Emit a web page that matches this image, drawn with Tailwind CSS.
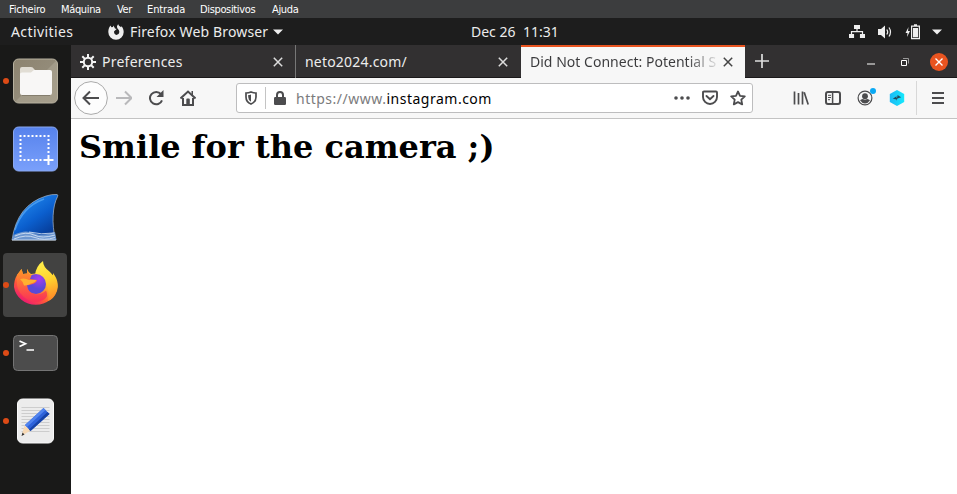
<!DOCTYPE html>
<html lang="en">
<head>
<meta charset="utf-8">
<title>Did Not Connect: Potential Security Issue</title>
<script src="https://cdn.jsdelivr.net/npm/@tailwindcss/browser@4"></script>
</head>
<body class="flex h-screen w-screen flex-col overflow-hidden bg-[#1b1b1b] font-['Noto_Sans',sans-serif] text-[14px] whitespace-nowrap">

<!-- Virtual machine menu -->
<nav class="flex h-[18px] shrink-0 items-center bg-[#3c3d3e] pt-px pl-[9px] font-['DejaVu_Sans_Condensed','DejaVu_Sans',sans-serif] text-[11px] leading-[17px] tracking-[-0.35px] text-white">
  <span class="w-[52px] tracking-[-0.2px]">Ficheiro</span><span class="w-[56px]">Máquina</span><span class="w-[30px]">Ver</span><span class="w-[53px] tracking-[-0.1px]">Entrada</span><span class="w-[72px]">Dispositivos</span><span>Ajuda</span>
</nav>

<!-- Desktop top bar -->
<header class="flex h-[27px] shrink-0 items-center bg-[#1d1d1d] leading-[26px] text-[#ececec]">
  <span class="w-[108px] pl-[11px] tracking-[0.4px]">Activities</span>
  <svg class="mr-[6px] size-4" viewBox="0 0 16 16"><path fill="#eee" fill-rule="evenodd" d="M1 4 2.400 1.500 3.500 3.200 5 3 5.500 1.500 7 4.500 8.700 5 7 6.400 6 7.600C6 10 7.200 10.900 8.300 10.900c1.800 0 3-1.300 3-3.100C11.300 5.500 9 4.800 9 3c0-1.200.5-2 1.300-2.700C10.500 2 12 2.200 13 3.300l.5-1C15 4 15.700 6 15.700 8A7.700 7.700 0 0 1 .3 8C.3 6.500.5 5.200 1 4z"/></svg>
  <span class="w-[143px] tracking-[0.15px]">Firefox Web Browser</span>
  <svg class="h-[6px] w-[10px]" viewBox="0 0 10 6"><path fill="#eee" d="M0 .5h10L5 5.500z"/></svg>
  <span class="ml-[188px] w-[52px]">Dec 26</span><span class="w-[36px]">11:31</span>
  <svg class="ml-[290px] h-4 w-4" viewBox="0 0 16 16"><g fill="#eee"><path d="M5 1h6v4H5zM0 10h5v4H0zM5.700 10h4.600v4H5.700zM11 10h5v4h-5z"/><path fill="none" stroke="#eee" stroke-width="1.200" d="M8 5v3M2.500 11V7.600h11V11"/></g><path fill="#1d1d1d" d="M5.200 9.500h5.600V15H5.200z"/></svg>
  <svg class="ml-3 h-4 w-4" viewBox="0 0 16 16"><path fill="#eee" d="M1 5h3l4-3.500v13L4 11H1z"/><path d="M9.800 5.500q1.800 2.500 0 5M12 3.500q3 4.500 0 9" fill="none" stroke="#eee" stroke-width="1.200"/></svg>
  <svg class="ml-3 h-4 w-4" viewBox="0 0 16 16"><path fill="#eee" d="M3.500 3 .5 9h2L2 13l3-6H3z"/><path fill="none" stroke="#eee" stroke-width="1.200" d="M6.600 2.100h7.800v12.500H6.600zM9 .9h3"/><path fill="#eee" d="M8 4h5v9.300H8z"/></svg>
  <svg class="ml-[11px] h-[6px] w-[10px]" viewBox="0 0 10 6"><path fill="#eee" d="M0 .5h10L5 5.500z"/></svg>
</header>

<div class="flex min-h-0 flex-1">
  <!-- Dock -->
  <aside class="flex w-[71px] shrink-0 flex-col gap-1 bg-[#191918] pt-1 pl-[3px]">
    <div class="flex h-16 w-16 items-center"><i class="h-[6px] w-[6px] rounded-full bg-[#dd4b16]"></i>
      <svg class="ml-[3.5px] h-[46px] w-[46px]" viewBox="0 0 46 46"><defs><linearGradient id="fo" x2="1" y2="1"><stop stop-color="#8c836f"/><stop offset=".5" stop-color="#938b79"/><stop offset=".51" stop-color="#a29b89"/><stop offset="1" stop-color="#a69e8b"/></linearGradient></defs><rect x=".5" y="1" width="44" height="44" rx="5" fill="url(#fo)" stroke="#b7b19f"/><path d="M7 20V11q0-2 2-2h9q2 0 3 2l2 2-2 5z" fill="#e1ddd4"/><path d="M7 16q0-1.500 2-1.500h9l3-2.500h16q2 0 2 2v21q0 2-2 2H9q-2 0-2-2z" fill="#f8f7f6"/><path d="M9 37.500h28" stroke="#847d6d"/></svg>
    </div>
    <div class="flex h-16 w-16 items-center pl-[9.500px]">
      <svg class="h-[46px] w-[46px]" viewBox="0 0 46 46"><defs><linearGradient id="sh" x2="0" y2="1"><stop stop-color="#5682ec"/><stop offset="1" stop-color="#7aa0fb"/></linearGradient></defs><rect x=".5" y="1" width="44" height="44" rx="5" fill="url(#sh)" stroke="#8aa8ef"/><path d="M6.500 10h30M6.500 34h24" stroke="#fff" stroke-width="2" stroke-dasharray="2 2"/><path d="M7.500 13v20M35.500 13v16" stroke="#fff" stroke-width="2" stroke-dasharray="2 2"/><path d="M30.500 34h10M35.500 29v10" stroke="#fff" stroke-width="2"/></svg>
    </div>
    <div class="flex h-16 w-16 items-center pl-[8px]">
      <svg class="h-[48px] w-[50px]" viewBox="0 0 50 48"><defs><linearGradient id="fin" x1=".2" x2=".9" y2="1"><stop stop-color="#2590f4"/><stop offset=".5" stop-color="#0b5fce"/><stop offset="1" stop-color="#052f83"/></linearGradient></defs><path d="M1 47Q6 12 35 3q6-2 11-1.500 1.500.3.500 2.200c-5 9-6 27-2 43.300z" fill="url(#fin)" stroke="#a9b9cb" stroke-width=".7"/><path d="M4 37Q11 14 33 6" stroke="#65b4fa" stroke-width="1.500" opacity=".6" fill="none"/><path d="M1 47 2.500 42Q14 36 22 40t22-1l1.500 8z" fill="#6c96cf"/><path d="M4 43q11-5 19-1t21 0M3 46q12-5 21-1.500t20 0M18 39q12 3 25 1M1 47h44" fill="none" stroke="#dce8f7" stroke-width=".8"/></svg>
    </div>
    <div class="flex h-16 w-16 items-center rounded bg-[#424241]"><i class="h-[6px] w-[6px] rounded-full bg-[#dd4b16]"></i>
      <svg class="ml-[3.5px] h-[48px] w-[46px]" viewBox="0 0 46 48"><defs><linearGradient id="fx" x1=".85" y1=".2" x2=".25" y2=".95"><stop stop-color="#ffe53d"/><stop offset=".4" stop-color="#ff9a2b"/><stop offset=".65" stop-color="#ff5a38"/><stop offset="1" stop-color="#ee1872"/></linearGradient><linearGradient id="fy" x1=".3" x2=".5" y2="1"><stop stop-color="#fff04b"/><stop offset=".5" stop-color="#ffd22f"/><stop offset="1" stop-color="#ff8a26"/></linearGradient><radialGradient id="fp" cx=".65" cy=".25"><stop stop-color="#a83cf0"/><stop offset="1" stop-color="#5a49d6"/></radialGradient><linearGradient id="fl" x2="0" y2="1"><stop stop-color="#ff9a25"/><stop offset="1" stop-color="#fa2f58"/></linearGradient></defs>
      <path d="M4 14 8.500 8l1.500 5 4-.5V8q1 3 4 5l18-2c6 4 8.500 9 8.500 15A22 21 0 0 1 1 26q0-7 3-12z" fill="url(#fx)"/><path d="M22 14q1-9 8-14 0 6 7 11l3 4v-3c4 5 6 11 4 18q-3 8-9 10 2-10-2-18-4-6-11-8z" fill="url(#fy)"/><circle cx="23" cy="23" r="10" fill="url(#fp)"/><path d="M4 14 8.500 8l1.500 5 4-.5V8q1 4 4.500 6.500L17 18l7 1q-.5 3-6 4.500-3 1-4 .5 1 9 9 9.500 6 0 10-4 3 6-2 9-8 5-16 0Q5 33 4 24z" fill="url(#fl)"/><path d="M7 18q5-1.500 9 1h7q0 2-5 3.500-4 2.500-7 2-1-4-4-6.500z" fill="#ffb030"/></svg>
    </div>
    <div class="flex h-16 w-16 items-center"><i class="h-[6px] w-[6px] rounded-full bg-[#dd4b16]"></i>
      <svg class="ml-[3.5px] h-[38px] w-[46px]" viewBox="0 0 46 38"><rect x=".5" y="1.500" width="44" height="35" rx="4" fill="#4c4c4c" stroke="#747474"/><path d="M6.500 7 12.500 9.800 6.500 12.500M13.500 16h7.500" fill="none" stroke="#fff" stroke-width="1.700"/></svg>
    </div>
    <div class="flex h-16 w-16 items-center"><i class="h-[6px] w-[6px] rounded-full bg-[#dd4b16]"></i>
      <svg class="ml-[3.5px] h-[46px] w-[46px]" viewBox="0 0 46 46"><rect x="4.500" y="1" width="36" height="44" rx="5" fill="#ececec" stroke="#fafafa"/><path d="M8.500 9.500h28M8.500 12.500h28M8.500 15.500h28M8.500 18.500h28M8.500 21.500h28M8.500 24.500h28M8.500 27.500h28M8.500 30.500h28M8.500 33.500h28" stroke="#c5c5c5" stroke-width=".8"/><path d="m8.500 38 3-10.500 6 5z" fill="#f7d9b5"/><path d="m8.500 38 1-3.500 2 2z" fill="#333"/><path d="m12 27 18.500-17 6 6-19 17z" fill="#2d62da"/><path d="m12 27 18.500-17 2 2L14 29z" fill="#5184ee"/><path d="m16 31.500 18.500-17.500 2 2-19 17z" fill="#1743a6"/></svg>
    </div>
  </aside>

  <!-- Browser window -->
  <main class="flex min-w-0 flex-1 flex-col bg-white">
    <div class="flex h-[33px] shrink-0 bg-[#323031] leading-[33px] text-[#ececec]">
      <div class="flex w-[225px] items-center border-r border-[#777] pl-[9px] shadow-[inset_0_-1px_#1b191a]">
        <svg class="mr-[6px] h-4 w-4" viewBox="0 0 16 16" fill="none" stroke="#f4f4f4" stroke-width="2"><circle cx="8" cy="8" r="4.200"/><path d="M8 0v4M8 12v4M0 8h4M12 8h4M2.300 2.300l2.800 2.800M10.900 10.900l2.800 2.800M2.300 13.700l2.800-2.800M10.900 5.100l2.800-2.800"/></svg>
        <span class="w-[171px] tracking-[0.25px]">Preferences</span>
        <svg class="h-[10px] w-[10px]" viewBox="0 0 10 10"><path d="m.8.8 8.400 8.400m0-8.400L.8 9.200" stroke="#ddd" stroke-width="1.500"/></svg>
      </div>
      <div class="flex w-[225px] items-center pl-[9px] shadow-[inset_0_-1px_#1b191a]">
        <span class="w-[193px] tracking-[0.2px]">neto2024.com/</span>
        <svg class="h-[10px] w-[10px]" viewBox="0 0 10 10"><path d="m.8.8 8.400 8.400m0-8.400L.8 9.200" stroke="#ddd" stroke-width="1.500"/></svg>
      </div>
      <div class="flex w-[224px] items-center border-t-2 border-[#e95420] bg-[#f7f7f7] pl-[9px] leading-[29px] text-[#3a3a3c]">
        <span class="w-[193px] pb-[2px]"><span class="bg-linear-to-r from-[#3a3a3c] from-[84%] to-[#3a3a3c]/15 bg-clip-text tracking-[0.02px] text-transparent">Did Not Connect: Potential S</span></span>
        <svg class="mb-[2px] h-[10px] w-[10px]" viewBox="0 0 10 10"><path d="m.8.8 8.400 8.400m0-8.400L.8 9.200" stroke="#444" stroke-width="1.500"/></svg>
      </div>
      <div class="flex flex-1 items-center pl-[10px] shadow-[inset_0_-1px_#1b191a]">
        <svg class="mb-px h-[14px] w-[14px]" viewBox="0 0 14 14"><path d="M7 0v14M0 7h14" stroke="#ddd" stroke-width="1.700"/></svg>
        <svg class="mt-[5px] ml-[98px] h-[2px] w-2" viewBox="0 0 8 2"><path d="M0 1h8" stroke="#fff"/></svg>
        <svg class="ml-[25px] h-[9px] w-[9px]" viewBox="0 0 9 9"><path d="M1.500 3.500h5v5h-5z" fill="none" stroke="#fff"/><path d="M3 1.500h5.500v5" fill="none" stroke="#999"/></svg>
        <svg class="ml-[21px] h-[18px] w-[18px]" viewBox="0 0 18 18"><circle cx="9" cy="9" r="9" fill="#e95420"/><path d="m5.500 5.500 7 7m0-7-7 7" stroke="#fff" stroke-width="1.400"/></svg>
      </div>
    </div>

    <div class="flex h-[41px] shrink-0 items-center border-b border-[#c3c3c3] bg-[#f7f7f7] pl-[3px] text-[#4c4c4e]">
      <svg class="h-[34px] w-[34px]" viewBox="0 0 34 34"><circle cx="17" cy="17" r="16.400" fill="#fdfdfd" stroke="#aaa" stroke-width="1"/><path d="M25 17H10M16 10.500 9.500 17l6.500 6.500" fill="none" stroke="currentColor" stroke-width="2"/></svg>
      <svg class="ml-2 h-4 w-4" viewBox="0 0 16 16"><path d="M0 8h15M9 1.500 15.500 8 9 14.500" fill="none" stroke="#b9b9bb" stroke-width="2"/></svg>
      <svg class="ml-4 h-4 w-4" viewBox="0 0 16 16"><path d="M13 4.200A6.200 6.200 0 1 0 14 10.300" fill="none" stroke="currentColor" stroke-width="2"/><path d="M15.500 0v7h-7z" fill="currentColor"/></svg>
      <svg class="ml-4 h-4 w-4" viewBox="0 0 16 16"><path d="m.5 8.500 7.500-7 7.500 7M3 8v7h10V8" fill="none" stroke="currentColor" stroke-width="2"/><path d="M6.300 14V9.500q0-1 1-1h1.500q1 0 1 1V14zM11.500 1H13v4h-1.500z" fill="currentColor"/></svg>
      <div class="ml-[40px] flex h-[30px] w-[517px] items-center rounded-[3px] border border-[#bdbdbe] bg-white pl-2">
        <svg class="h-[14px] w-3" viewBox="0 0 12 14"><path d="M6 1q2.500 1 5 1v4q0 5-5 7Q1 11 1 6V2q2.500 0 5-1z" fill="none" stroke="currentColor" stroke-width="1.700"/><path d="M6 3.500Q4.500 4 3.200 4v2q0 3 2.800 4.800z" fill="currentColor"/></svg>
        <i class="ml-2 h-[22px] w-px bg-[#c4c4c4]"></i>
        <svg class="ml-2 h-[14px] w-3" viewBox="0 0 12 14"><path d="M3 7V4a3 3 0 0 1 6 0v3" fill="none" stroke="currentColor" stroke-width="2"/><rect y="6" width="12" height="8" rx="1.200" fill="currentColor"/></svg>
        <span class="ml-[10px] w-[378px] tracking-[0.5px] text-[#7b7b7d]">https://www.<span class="text-black">instagram.com</span></span>
        <svg class="h-4 w-4" viewBox="0 0 16 16" fill="currentColor"><circle cx="2" cy="8" r="1.800"/><circle cx="8" cy="8" r="1.800"/><circle cx="14" cy="8" r="1.800"/></svg>
        <svg class="ml-3 h-4 w-4" viewBox="0 0 16 16" fill="none" stroke="currentColor" stroke-width="1.900"><path d="M1 2.500q0-1 1-1h12q1 0 1 1V7A7 7 0 0 1 1 7z"/><path d="m4.500 6 3.500 3.300L11.500 6" stroke-linecap="round"/></svg>
        <svg class="ml-3 h-4 w-4" viewBox="0 0 16 16"><path d="m8 1.500 2 4.300 4.800.6-3.500 3.300.9 4.700L8 12.100l-4.200 2.300.9-4.700L1.200 6.400 6 5.800z" fill="none" stroke="currentColor" stroke-width="1.800" stroke-linejoin="round"/></svg>
      </div>
      <svg class="ml-[40px] h-4 w-4" viewBox="0 0 16 16"><path d="M1.500 1.500v13M5.500 3v11.500M9.500 1.500v13M11.200 2.300l4 12.200" stroke="currentColor" stroke-width="1.700"/></svg>
      <svg class="ml-4 h-4 w-4" viewBox="0 0 16 16"><rect x="1" y="2" width="14" height="12" rx="2" fill="none" stroke="currentColor" stroke-width="2"/><path d="M7.600 2v12" stroke="currentColor" stroke-width="1.500"/><path d="M3 5.300h3M3 7.500h3M3 9.700h2" stroke="currentColor"/></svg>
      <div class="relative ml-4 h-4 w-4"><svg class="h-4 w-4" viewBox="0 0 16 16"><circle cx="8" cy="8" r="6.900" fill="none" stroke="currentColor" stroke-width="1.200"/><circle cx="8" cy="6.200" r="2.900" fill="currentColor"/><path d="M3 10.300q2-1.300 3-1.300 2 1 4 0 1 0 3 1.300Q11 13.500 8 13.500t-5-3.200z" fill="currentColor"/></svg><i class="absolute -top-[2px] left-[13px] h-[6px] w-[6px] rounded-full bg-[#0aa9f4]"></i></div>
      <svg class="ml-4 h-4 w-4" viewBox="0 0 16 16"><defs><linearGradient id="hx" x2="1"><stop stop-color="#1cb9f5"/><stop offset="1" stop-color="#14e8fc"/></linearGradient></defs><path d="m8 .1 7.200 3.900v8L8 15.900.8 12V4z" fill="url(#hx)"/><path d="m3.800 8.800 3.700-2.500v1.500l.8.700-.8 2.500V9.500zM12.200 7.200 8.500 5v1.200l-.5 1 .5 2.300V8.500z" fill="#24495b"/></svg>
      <i class="ml-[11px] h-[34px] w-px bg-[#d8d8d8]"></i>
      <svg class="ml-[15px] h-3 w-3" viewBox="0 0 12 12"><path d="M0 1h12M0 6h12M0 11h12" stroke="currentColor" stroke-width="1.800"/></svg>
    </div>

    <section class="flex-1 bg-white pt-[9px] pl-2 text-black">
      <h1 class="font-['DejaVu_Serif',serif] text-[32px] leading-[38px] font-bold">Smile for the camera ;)</h1>
    </section>
  </main>
</div>
</body>
</html>
